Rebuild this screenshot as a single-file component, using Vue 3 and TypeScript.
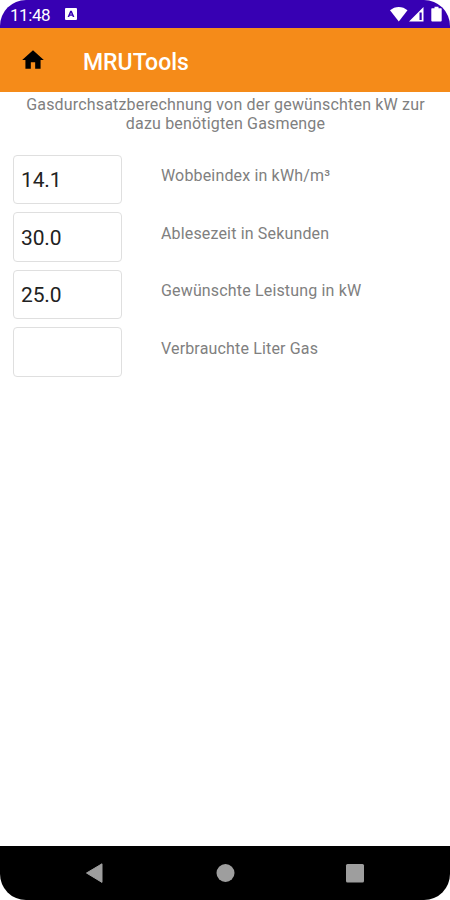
<script setup lang="ts">
import { ref } from 'vue'

interface Field {
  id: string
  label: string
  value: string
}

const fields = ref<Field[]>([
  { id: 'wobbe', label: 'Wobbeindex in kWh/m³', value: '14.1' },
  { id: 'time', label: 'Ablesezeit in Sekunden', value: '30.0' },
  { id: 'power', label: 'Gewünschte Leistung in kW', value: '25.0' },
  { id: 'litres', label: 'Verbrauchte Liter Gas', value: '' },
])
</script>

<template>
  <div class="phone">
    <div class="status">
      <span class="clock">11:48</span>
      <svg class="notice" width="12" height="12" viewBox="0 0 12 12">
        <path fill="#fff" fill-rule="evenodd" d="M1 0h10a1 1 0 0 1 1 1v10a1 1 0 0 1-1 1H1a1 1 0 0 1-1-1V1a1 1 0 0 1 1-1zM5.2 2.8 2.6 9h1.6l.5-1.2h2.6L7.8 9h1.6L6.800 2.800zM6 4.700l.7 1.800H5.300z" />
      </svg>
      <svg class="signals" width="54" height="18" viewBox="0 0 54 18">
        <path fill="#fff" d="M0 4.300C5-.2 12.500-.2 17.500 4.300L8.800 15.500z" />
        <path fill="#fff" fill-rule="evenodd" d="M19 15.500 33.500 1v14.500zM29.500 6.500v7.500h2.200V6.500z" />
        <path fill="#fff" d="M42 2.200h2.500V.8h4v1.400H51q.7 0 .7.800v11.500q0 1-.9 1h-8.600q-.9 0-.9-1V3q0-.8.700-.8z" />
      </svg>
    </div>
    <header class="bar">
      <svg class="home" width="26" height="26" viewBox="0 0 24 24">
        <path d="M10 20v-6h4v6h5v-8h3L12 3 2 12h3v8z" />
      </svg>
      <h1>MRUTools</h1>
    </header>
    <main>
      <p class="intro">Gasdurchsatzberechnung von der gewünschten kW zur<br />dazu benötigten Gasmenge</p>
      <div class="form">
        <div v-for="f in fields" :key="f.id" class="row">
          <input :id="f.id" v-model="f.value" type="text" inputmode="decimal" />
          <label :for="f.id">{{ f.label }}</label>
        </div>
      </div>
    </main>
    <nav class="nav">
      <svg width="450" height="54" viewBox="0 0 450 54">
        <path d="M86.500 27 102 17.800v18.600z" fill="#9e9e9e" stroke="#9e9e9e" stroke-linejoin="round" />
        <circle cx="225.500" cy="27" r="9" fill="#9e9e9e" />
        <rect x="346" y="18" width="18" height="18.500" rx="1.500" fill="#9e9e9e" />
      </svg>
    </nav>
  </div>
</template>

<style>
body {
  background: #fff;
}
</style>

<style scoped>
.phone {
  display: flex;
  flex-direction: column;
  width: 450px;
  height: 900px;
  box-sizing: border-box;
  overflow: hidden;
  border-radius: 26px;
  background: #fff;
  font-family: Roboto, sans-serif;
}
.status {
  display: flex;
  height: 27.5px;
  flex: none;
  background: #3700b3;
  color: #fff;
}
.clock {
  width: 55px;
  padding-left: 10px;
  font-size: 17px;
  line-height: 30px;
  font-weight: 400;
  letter-spacing: -0.45px;
}
.notice {
  margin-top: 8px;
}
.signals {
  margin: 6px 6px 0 auto;
}
.bar {
  display: flex;
  align-items: center;
  height: 64.5px;
  flex: none;
  padding-left: 20px;
  box-sizing: border-box;
  background: #f58b19;
}
.home {
  margin-top: 1px;
}
h1 {
  margin: 6px 0 0 37px;
  color: #fff;
  font-size: 23px;
  font-weight: 500;
  line-height: 30px;
}
main {
  flex: 1;
}
.intro {
  margin: 2.5px 0 0 1px;
  text-align: center;
  font-size: 16px;
  line-height: 19.5px;
  letter-spacing: 0.17px;
  white-space: nowrap;
  color: #808080;
}
.form {
  display: flex;
  flex-direction: column;
  gap: 8px;
  padding: 21px 13px 0;
}
.row {
  display: flex;
  height: 49.5px;
}
input {
  width: 109px;
  height: 49.5px;
  box-sizing: border-box;
  padding: 2px 7px 0;
  border: 1.5px solid #dfdfdf;
  border-radius: 4px;
  background: #fff;
  font: 21px Roboto, sans-serif;
  letter-spacing: -0.15px;
  color: #222;
  outline: none;
}
label {
  margin: 11.5px 0 0 39px;
  font-size: 16px;
  line-height: 20px;
  letter-spacing: 0.16px;
  color: #808080;
}
.nav {
  height: 54.5px;
  flex: none;
  background: #000;
}
.nav svg {
  display: block;
}
</style>
